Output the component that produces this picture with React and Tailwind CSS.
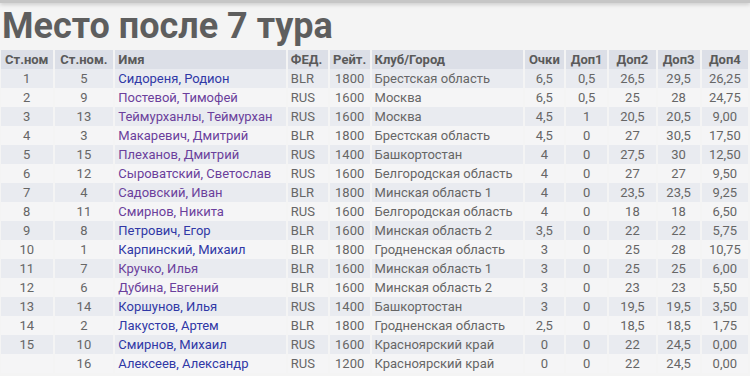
import React from 'react';

const rows = [
  ['1', '5', 'Сидореня, Родион', 'BLR', '1800', 'Брестская область', '6,5', '0,5', '26,5', '29,5', '26,25', 'blue'],
  ['2', '9', 'Постевой, Тимофей', 'RUS', '1600', 'Москва', '6,5', '0,5', '25', '28', '24,75', 'purple'],
  ['3', '13', 'Теймурханлы, Теймурхан', 'RUS', '1600', 'Москва', '4,5', '1', '20,5', '20,5', '9,00', 'purple'],
  ['4', '3', 'Макаревич, Дмитрий', 'BLR', '1800', 'Брестская область', '4,5', '0', '27', '30,5', '17,50', 'purple'],
  ['5', '15', 'Плеханов, Дмитрий', 'RUS', '1400', 'Башкортостан', '4', '0', '27,5', '30', '12,50', 'purple'],
  ['6', '12', 'Сыроватский, Светослав', 'RUS', '1600', 'Белгородская область', '4', '0', '27', '27', '9,50', 'purple'],
  ['7', '4', 'Садовский, Иван', 'BLR', '1800', 'Минская область 1', '4', '0', '23,5', '23,5', '9,25', 'purple'],
  ['8', '11', 'Смирнов, Никита', 'RUS', '1600', 'Белгородская область', '4', '0', '18', '18', '6,50', 'purple'],
  ['9', '8', 'Петрович, Егор', 'BLR', '1600', 'Минская область 2', '3,5', '0', '22', '22', '5,75', 'blue'],
  ['10', '1', 'Карпинский, Михаил', 'BLR', '1800', 'Гродненская область', '3', '0', '25', '28', '10,75', 'blue'],
  ['11', '7', 'Кручко, Илья', 'BLR', '1600', 'Минская область 1', '3', '0', '25', '25', '6,00', 'purple'],
  ['12', '6', 'Дубина, Евгений', 'BLR', '1600', 'Минская область 2', '3', '0', '23', '23', '5,50', 'purple'],
  ['13', '14', 'Коршунов, Илья', 'RUS', '1400', 'Башкортостан', '3', '0', '19,5', '19,5', '3,50', 'blue'],
  ['14', '2', 'Лакустов, Артем', 'BLR', '1800', 'Гродненская область', '2,5', '0', '18,5', '18,5', '1,75', 'blue'],
  ['15', '10', 'Смирнов, Михаил', 'RUS', '1600', 'Красноярский край', '0', '0', '22', '24,5', '0,00', 'blue'],
  ['', '16', 'Алексеев, Александр', 'RUS', '1200', 'Красноярский край', '0', '0', '22', '24,5', '0,00', 'blue'],
];

// ширины колонок
const cols = [53, 61, 173, 41, 41, 153, 41, 43, 49, 44, 49];

const App = () => {
  return (
    <div className="w-[750px] h-[376px] overflow-hidden bg-[#f4f4f4] text-[#666] font-['Roboto','Liberation_Sans',sans-serif]">
      {/* верхняя полоса */}
      <div className="h-[3px] bg-[#c6c6c6] shadow-[0_1px_4px_rgba(0,0,0,0.25)]" />

      <h1 className="pl-[2px] pt-[3px] mb-[4px] text-[36px] leading-[40px] font-bold text-[#5e5e5e] whitespace-nowrap">
        Место после 7 тура
      </h1>

      <table className="table-fixed border-separate border-spacing-x-[2px] border-spacing-y-0 text-[13px] leading-[19px] -ml-[1px]">
        <colgroup>
          {cols.map((w, i) => (
            <col key={i} style={{ width: w }} />
          ))}
        </colgroup>
        <thead>
          <tr className="h-[19px] bg-[#dcdfe7] font-bold text-[#5a5a5a]">
            <th className="text-center whitespace-nowrap">Ст.ном</th>
            <th className="text-center whitespace-nowrap">Ст.ном.</th>
            <th className="text-left pl-[3px]">Имя</th>
            <th className="text-left pl-[3px]">ФЕД.</th>
            <th className="text-center">Рейт.</th>
            <th className="text-left pl-[3px] whitespace-nowrap">Клуб/Город</th>
            <th className="text-center">Очки</th>
            <th className="text-center">Доп1</th>
            <th className="text-center">Доп2</th>
            <th className="text-center">Доп3</th>
            <th className="text-center">Доп4</th>
          </tr>
        </thead>
        <tbody>
          {rows.map((r, i) => (
            <tr key={i} className={i % 2 === 0 ? 'h-[19px] bg-[#e9ebf0]' : 'h-[19px] bg-[#f5f5f6]'}>
              <td className="text-center">{r[0]}</td>
              <td className="text-center">{r[1]}</td>
              <td
                className={
                  r[11] === 'blue'
                    ? 'pl-[3px] whitespace-nowrap text-[#3038a6]'
                    : 'pl-[3px] whitespace-nowrap text-[#6b3f9c]'
                }
              >
                {r[2]}
              </td>
              <td className="pl-[3px]">{r[3]}</td>
              <td className="text-center">{r[4]}</td>
              <td className="pl-[3px] whitespace-nowrap">{r[5]}</td>
              <td className="text-center">{r[6]}</td>
              <td className="text-center">{r[7]}</td>
              <td className="text-center">{r[8]}</td>
              <td className="text-center">{r[9]}</td>
              <td className="text-center">{r[10]}</td>
            </tr>
          ))}
        </tbody>
      </table>
    </div>
  );
};

export default App;
